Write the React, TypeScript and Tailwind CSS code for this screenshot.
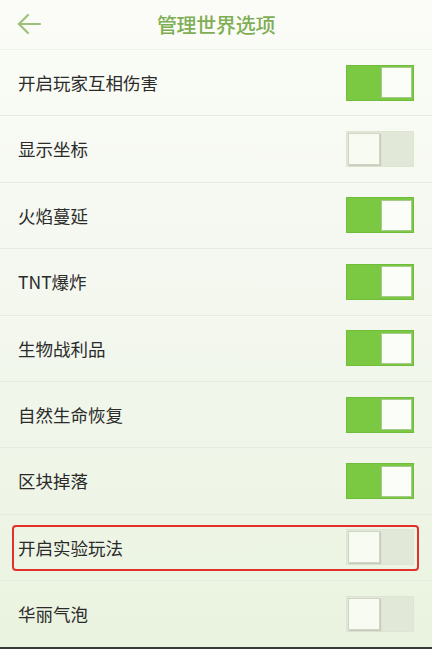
import React from "react";

type Option = { label: string; on: boolean; highlight?: boolean };

const OPTIONS: Option[] = [
  { label: "开启玩家互相伤害", on: true },
  { label: "显示坐标", on: false },
  { label: "火焰蔓延", on: true },
  { label: "TNT爆炸", on: true },
  { label: "生物战利品", on: true },
  { label: "自然生命恢复", on: true },
  { label: "区块掉落", on: true },
  { label: "开启实验玩法", on: false, highlight: true },
  { label: "华丽气泡", on: false },
];

function Toggle({ on }: { on: boolean }) {
  if (on) {
    return (
      <div className="flex h-[36px] w-[68px] items-center justify-end border border-[#6fbd3a] bg-[#7bc943] pr-[1px]">
        <div className="h-[31px] w-[31px] border border-[#a7c98c] bg-[#fbfdf8]" />
      </div>
    );
  }
  return (
    <div className="flex h-[36px] w-[68px] items-center border border-[#dfe5d3] bg-[#e2e8d7] pl-[1px]">
      <div className="h-[32px] w-[32px] border border-[#d0d6c6] bg-[#f8fbf2] shadow-[1px_1px_1px_rgba(0,0,0,0.12)]" />
    </div>
  );
}

export default function App() {
  return (
    <div
      className="relative h-[649px] w-[432px] overflow-hidden bg-gradient-to-b from-[#fbfcf7] via-[#f3f7ee] to-[#eaf3df]"
      style={{ fontFamily: '"Noto Sans CJK SC", "Noto Sans", sans-serif' }}
    >
      <header className="relative flex h-[50px] items-center justify-center border-b border-[#eef1ea]">
        <svg
          className="absolute left-[16px] top-[13px]"
          width="26"
          height="24"
          viewBox="0 0 26 24"
          fill="none"
          stroke="#9cc27a"
          strokeWidth="2.2"
          strokeLinecap="round"
          strokeLinejoin="round"
        >
          <path d="M3 11h21" />
          <path d="M12 2L3 11l9 9" />
        </svg>
        <h1 className="text-[20px] font-medium leading-none tracking-[-0.3px] text-[#7fae55]">
          管理世界选项
        </h1>
      </header>
      <ul>
        {OPTIONS.map((o) => (
          <li
            key={o.label}
            className="relative flex h-[66.4px] items-center justify-between border-b border-[#e6ebe0] pl-[18px] pr-[18px]"
          >
            <span className="text-[17.5px] leading-none text-[#2b2b2b]">{o.label}</span>
            <Toggle on={o.on} />
            {o.highlight && (
              <div className="pointer-events-none absolute bottom-[9px] left-[12px] right-[13px] top-[10px] rounded-[4px] border-[2.5px] border-[#e3302d]" />
            )}
          </li>
        ))}
      </ul>
      <div className="absolute bottom-0 left-0 h-[2px] w-full bg-[#3a3a3a]" />
    </div>
  );
}
